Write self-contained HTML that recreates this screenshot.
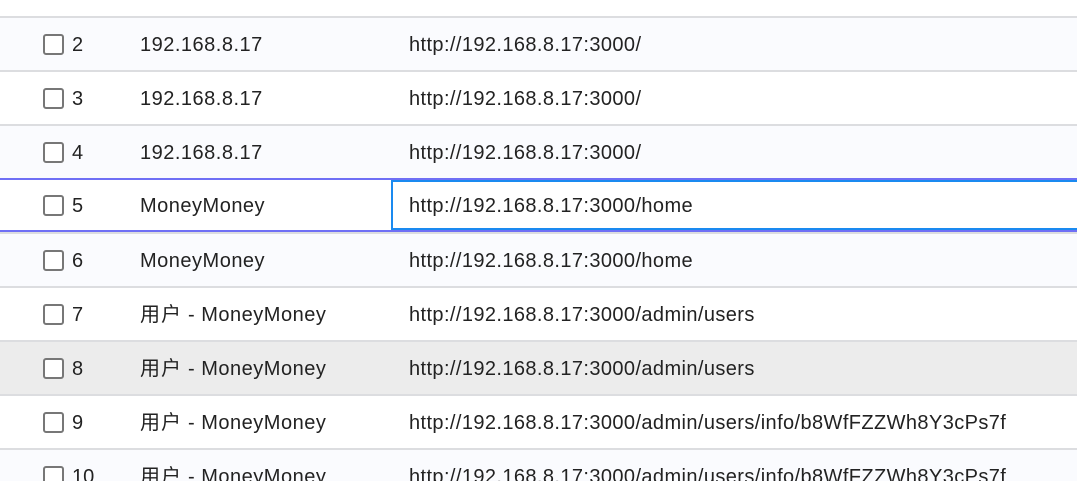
<!DOCTYPE html>
<html style="overflow:hidden;height:481px"><head><meta charset="utf-8"><style>
body{margin:0;width:1077px;height:481px;overflow:hidden;background:#fff;font-family:"Liberation Sans","Noto Sans CJK SC",sans-serif;font-size:20px;color:#222;position:relative}
.sep{position:absolute;left:0;width:1077px;height:2px;background:#dcdde0}
.row{position:absolute;left:0;width:1077px;height:52px;line-height:54px}
.cb{position:absolute;left:43px;top:16px;width:17px;height:17px;border:2px solid #777;border-radius:3px;background:#fff}
.n{position:absolute;left:72px;top:0}
.c2{position:absolute;left:140px;top:0;white-space:nowrap;letter-spacing:0.5px}
.c3{position:absolute;left:409px;top:0;white-space:nowrap;letter-spacing:0.4px}
.cj{font-size:20px;letter-spacing:1px}
</style></head><body>
<div class="c3" style="top:-40px;line-height:54px">http://192.168.8.17:3000/</div>
<div class="sep" style="top:16px"></div>
<div class="row" style="top:18px;background:#fafbfe"><div class="cb"></div><div class="n">2</div><div class="c2">192.168.8.17</div><div class="c3">http://192.168.8.17:3000/</div></div>
<div class="sep" style="top:70px"></div>
<div class="row" style="top:72px"><div class="cb"></div><div class="n">3</div><div class="c2">192.168.8.17</div><div class="c3">http://192.168.8.17:3000/</div></div>
<div class="sep" style="top:124px"></div>
<div class="row" style="top:126px;background:#fafbfe"><div class="cb"></div><div class="n">4</div><div class="c2">192.168.8.17</div><div class="c3">http://192.168.8.17:3000/</div></div>
<div class="sep" style="top:178px;background:#6f6ff5"></div>
<div class="row" style="top:180px;height:50px;line-height:52px"><div class="cb" style="top:15px"></div><div class="n">5</div><div class="c2">MoneyMoney</div>
<div style="position:absolute;left:391px;top:0;width:686px;height:46px;border:2px solid #1a8af0;border-right:none"></div>
<div class="c3">http://192.168.8.17:3000/home</div></div>
<div class="sep" style="top:230px;background:#6f6ff5"></div>
<div class="sep" style="top:232px"></div>
<div class="row" style="top:234px;background:#fafbfe"><div class="cb"></div><div class="n">6</div><div class="c2">MoneyMoney</div><div class="c3">http://192.168.8.17:3000/home</div></div>
<div class="sep" style="top:286px"></div>
<div class="row" style="top:288px"><div class="cb"></div><div class="n">7</div><div class="c2"><span class="cj">用户</span> - MoneyMoney</div><div class="c3">http://192.168.8.17:3000/admin/users</div></div>
<div class="sep" style="top:340px"></div>
<div class="row" style="top:342px;background:#ececec"><div class="cb"></div><div class="n">8</div><div class="c2"><span class="cj">用户</span> - MoneyMoney</div><div class="c3">http://192.168.8.17:3000/admin/users</div></div>
<div class="sep" style="top:394px"></div>
<div class="row" style="top:396px"><div class="cb"></div><div class="n">9</div><div class="c2"><span class="cj">用户</span> - MoneyMoney</div><div class="c3">http://192.168.8.17:3000/admin/users/info/b8WfFZZWh8Y3cPs7f</div></div>
<div class="sep" style="top:448px"></div>
<div class="row" style="top:450px;background:#fafbfe"><div class="cb"></div><div class="n">10</div><div class="c2"><span class="cj">用户</span> - MoneyMoney</div><div class="c3">http://192.168.8.17:3000/admin/users/info/b8WfFZZWh8Y3cPs7f</div></div>
</body></html>
